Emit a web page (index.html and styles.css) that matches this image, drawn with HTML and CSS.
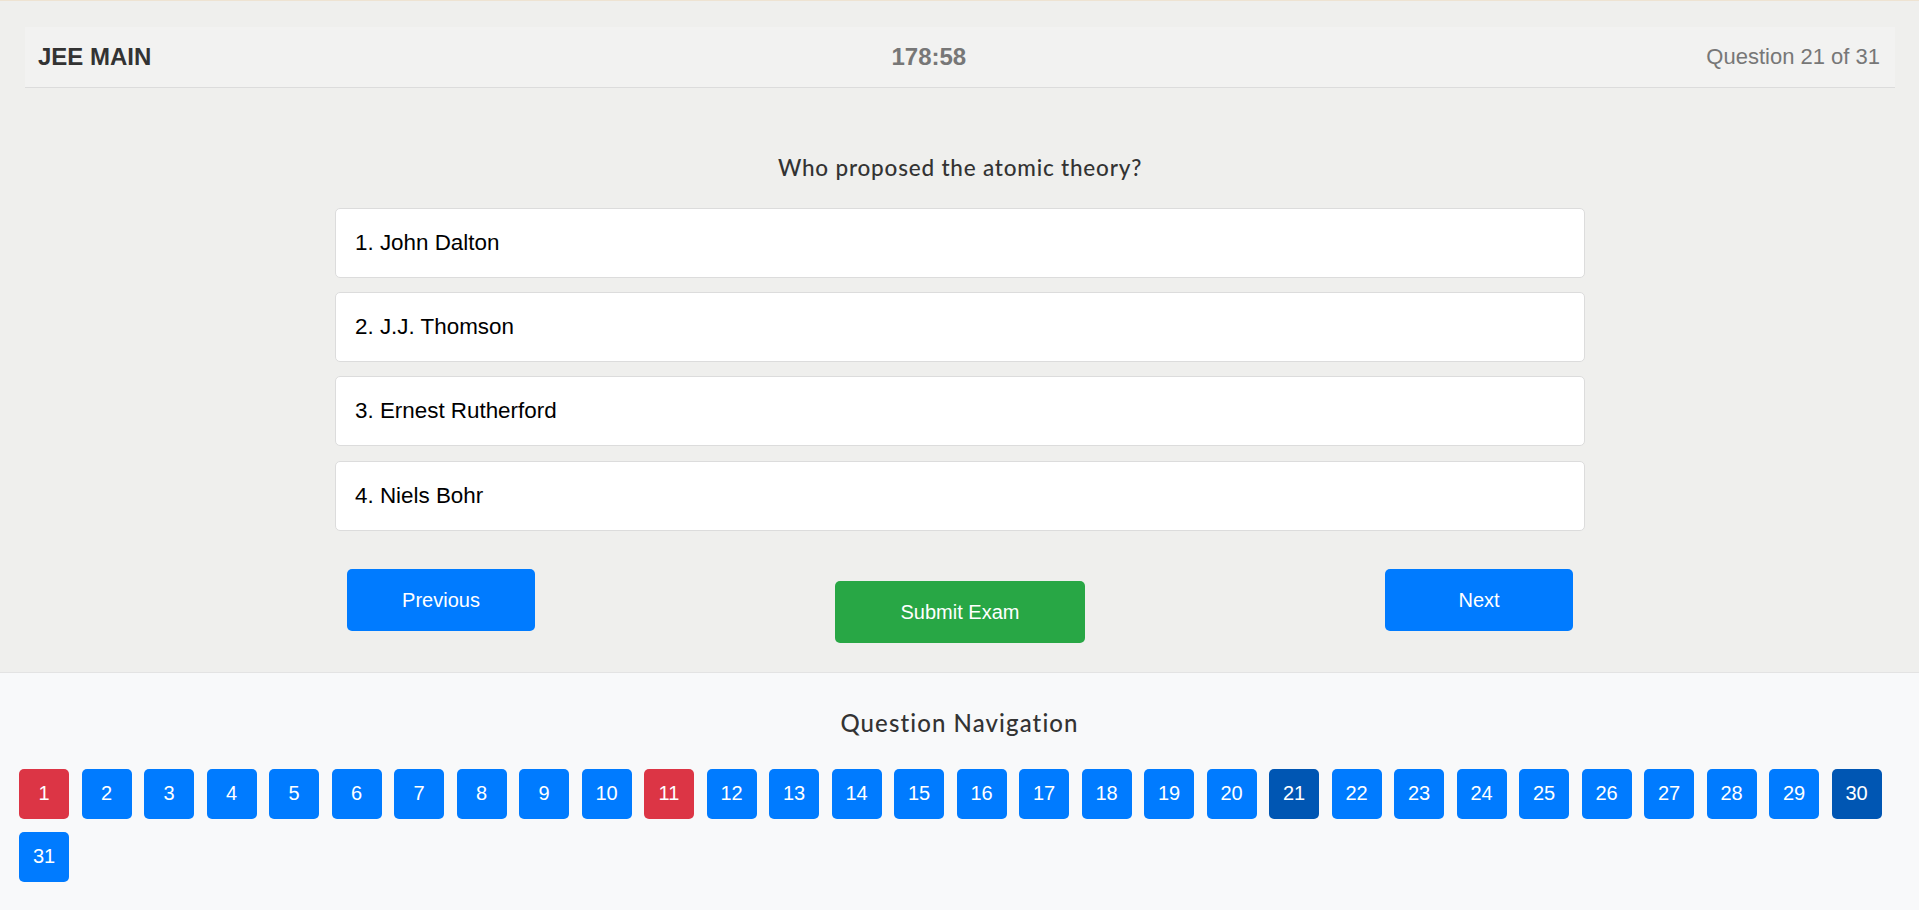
FILE: index.html
```html
<!DOCTYPE html>
<html lang="en">
<head>
<meta charset="utf-8">
<title>JEE MAIN Exam</title>
<link rel="stylesheet" href="styles.css">
</head>
<body>
<div class="topline"></div>
<div class="exam">
  <header class="exam-header">
    <div class="exam-title">JEE MAIN</div>
    <div class="exam-timer">178:58</div>
    <div class="exam-progress">Question 21 of 31</div>
  </header>
  <main class="quiz">
    <h2 class="question">Who proposed the atomic theory?</h2>
    <div class="options">
      <div class="option">1. John Dalton</div>
      <div class="option">2. J.J. Thomson</div>
      <div class="option">3. Ernest Rutherford</div>
      <div class="option">4. Niels Bohr</div>
    </div>
    <div class="controls">
      <button class="btn btn-blue">Previous</button>
      <button class="btn btn-green btn-submit">Submit Exam</button>
      <button class="btn btn-blue">Next</button>
    </div>
  </main>
</div>
<section class="nav">
  <h3 class="nav-title">Question Navigation</h3>
  <div class="nav-grid">
    <button class="qbtn red">1</button>
    <button class="qbtn">2</button>
    <button class="qbtn">3</button>
    <button class="qbtn">4</button>
    <button class="qbtn">5</button>
    <button class="qbtn">6</button>
    <button class="qbtn">7</button>
    <button class="qbtn">8</button>
    <button class="qbtn">9</button>
    <button class="qbtn">10</button>
    <button class="qbtn red">11</button>
    <button class="qbtn">12</button>
    <button class="qbtn">13</button>
    <button class="qbtn">14</button>
    <button class="qbtn">15</button>
    <button class="qbtn">16</button>
    <button class="qbtn">17</button>
    <button class="qbtn">18</button>
    <button class="qbtn">19</button>
    <button class="qbtn">20</button>
    <button class="qbtn dark">21</button>
    <button class="qbtn">22</button>
    <button class="qbtn">23</button>
    <button class="qbtn">24</button>
    <button class="qbtn">25</button>
    <button class="qbtn">26</button>
    <button class="qbtn">27</button>
    <button class="qbtn">28</button>
    <button class="qbtn">29</button>
    <button class="qbtn dark">30</button>
    <button class="qbtn">31</button>
  </div>
</section>
</body>
</html>
```
FILE: styles.css
```css
html, body {
  margin: 0;
  padding: 0;
}
body {
  background: #f8f9fa;
  font-family: "Liberation Sans", Arial, sans-serif;
  color: #333;
  overflow: hidden;
}
.topline {
  height: 1px;
  background: #eee3d2;
}
.exam {
  background: #efefed;
  padding: 26px 24px 29px 25px;
}
.exam-header {
  height: 61px;
  box-sizing: border-box;
  background: #f2f2f1;
  border-bottom: 1px solid #dcdcdc;
  display: flex;
  justify-content: space-between;
  align-items: center;
  padding: 0 15px 0 13px;
}
.exam-title {
  font-size: 24px;
  font-weight: 700;
  color: #333;
}
.exam-timer {
  font-size: 24px;
  font-weight: 700;
  color: #777;
}
.exam-progress {
  font-size: 22px;
  color: #777;
}
.quiz {
  width: 1250px;
  margin: 0 auto;
  padding-top: 65px;
}
.question {
  margin: 0 0 24.5px;
  font-family: Lato, "Open Sans", sans-serif;
  font-weight: 500;
  font-size: 22.5px;
  letter-spacing: 0.8px;
  line-height: 30px;
  text-align: center;
  color: #333;
}
.options {
  display: flex;
  flex-direction: column;
  gap: 14.4px;
}
.option {
  height: 70px;
  box-sizing: border-box;
  background: #fff;
  border: 1px solid #dcdcdc;
  border-radius: 5px;
  display: flex;
  align-items: center;
  padding: 0 19px;
  font-size: 22.4px;
  color: #000;
}
.controls {
  display: flex;
  justify-content: space-between;
  align-items: flex-start;
  padding: 0 12px;
  margin-top: 38.5px;
}
.btn {
  border: none;
  border-radius: 5px;
  color: #fff;
  font-family: "Liberation Sans", Arial, sans-serif;
  font-size: 20px;
  height: 62px;
  width: 188px;
  cursor: pointer;
}
.btn-blue {
  background: #007bff;
}
.btn-green {
  background: #28a745;
}
.btn-submit {
  width: 250px;
  margin-top: 12px;
}
.nav {
  border-top: 1px solid #e3e3e3;
  padding: 34px 0 27px 19px;
}
.nav-title {
  margin: 0 0 29.5px;
  font-family: Lato, "Open Sans", sans-serif;
  font-weight: 500;
  font-size: 24px;
  letter-spacing: 1.1px;
  line-height: 32px;
  text-align: center;
  color: #333;
  padding-right: 19px;
}
.nav-grid {
  display: flex;
  flex-wrap: wrap;
  column-gap: 12.5px;
  row-gap: 13px;
}
.qbtn {
  width: 50px;
  height: 50px;
  border: none;
  border-radius: 5px;
  background: #007bff;
  color: #fff;
  font-family: "Liberation Sans", Arial, sans-serif;
  font-size: 20px;
  padding: 0;
  cursor: pointer;
}
.qbtn.red {
  background: #dc3545;
}
.qbtn.dark {
  background: #0056b3;
}
```
